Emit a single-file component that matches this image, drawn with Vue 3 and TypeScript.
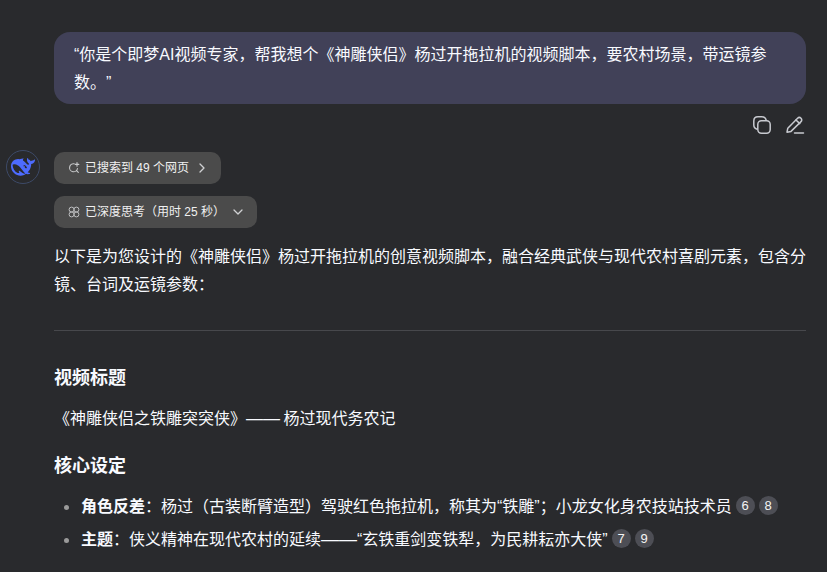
<script setup lang="ts">
const intro = '以下是为您设计的《神雕侠侣》杨过开拖拉机的创意视频脚本，融合经典武侠与现代农村喜剧元素，包含分镜、台词及运镜参数：'
</script>

<template>
  <div class="page">
    <div class="bubble">“你是个即梦AI视频专家，帮我想个《神雕侠侣》杨过开拖拉机的视频脚本，要农村场景，带运镜参数。”</div>
    <div class="actions">
      <svg width="20" height="20" viewBox="0 0 20 20" fill="none" stroke="#c8cad0" stroke-width="1.5">
        <rect x="5.8" y="5.8" width="12.4" height="12.4" rx="3.6" />
        <path d="M5.2 14.2C3 13.6 1.8 12.2 1.8 10V6c0-2.6 1.6-4.2 4.2-4.2h4c2.2 0 3.600 1.200 4.200 3.400" />
      </svg>
      <svg width="20" height="20" viewBox="0 0 20 20" fill="none" stroke="#c8cad0" stroke-width="1.5" stroke-linejoin="round" stroke-linecap="round">
        <path d="M2 17.200l.8-4L12.600 3.200c1-1 2.400-1 3.400 0s1 2.400 0 3.400L6 16.400z" />
        <path d="M11 5l3.800 3.600" />
        <path d="M9.500 18h9" />
      </svg>
    </div>
    <div class="answer">
      <div class="avatar">
        <svg width="24" height="24" viewBox="0 0 24 24">
          <path fill="#4d6bfe" d="M23.748 4.482c-.254-.124-.364.113-.512.234-.051.039-.094.09-.137.136-.372.397-.806.657-1.373.626-.829-.046-1.537.214-2.163.848-.133-.782-.575-1.248-1.247-1.548-.352-.156-.708-.311-.955-.65-.172-.241-.219-.51-.305-.774-.055-.16-.11-.323-.293-.35-.2-.031-.278.136-.356.276-.313.572-.434 1.202-.422 1.84.027 1.436.633 2.58 1.838 3.393.137.093.172.187.129.323-.082.28-.18.552-.266.833-.055.179-.137.217-.329.14a5.526 5.526 0 01-1.736-1.18c-.857-.828-1.631-1.742-2.597-2.458a11.365 11.365 0 00-.689-.471c-.985-.957.13-1.743.388-1.836.27-.098.093-.432-.779-.428-.872.004-1.67.295-2.687.684a3.055 3.055 0 01-.465.137 9.597 9.597 0 00-2.883-.102c-1.885.21-3.39 1.102-4.497 2.623C.082 8.606-.231 10.684.152 12.85c.403 2.284 1.569 4.175 3.36 5.653 1.858 1.533 3.997 2.284 6.438 2.14 1.482-.085 3.133-.284 4.994-1.86.47.234.962.327 1.78.397.63.059 1.236-.03 1.705-.128.735-.156.684-.837.419-.961-2.155-1.004-1.682-.595-2.113-.926 1.096-1.296 2.746-2.642 3.392-7.003.05-.347.007-.565 0-.845-.004-.17.035-.237.23-.256a4.173 4.173 0 001.545-.475c1.396-.763 1.96-2.015 2.093-3.517.02-.23-.004-.467-.247-.588zM11.581 18c-2.089-1.642-3.102-2.183-3.52-2.16-.392.024-.321.471-.235.763.09.288.207.486.371.739.114.167.192.416-.113.603-.673.416-1.842-.14-1.897-.167-1.361-.802-2.5-1.86-3.301-3.307-.774-1.393-1.224-2.887-1.298-4.482-.02-.386.093-.522.477-.592a4.696 4.696 0 011.529-.039c2.132.312 3.946 1.265 5.468 2.774.868.86 1.525 1.887 2.202 2.891.72 1.066 1.494 2.082 2.48 2.914.348.292.625.514.891.677-.802.09-2.14.11-3.054-.614zm1-6.44a.306.306 0 01.415-.287.302.302 0 01.2.288.306.306 0 01-.31.307.303.303 0 01-.304-.308zm3.11 1.596c-.2.081-.399.151-.59.16a1.245 1.245 0 01-.798-.254c-.274-.23-.47-.358-.552-.758a1.73 1.73 0 01.016-.588c.07-.327-.008-.537-.239-.727-.187-.156-.426-.199-.688-.199a.559.559 0 01-.254-.078c-.11-.054-.2-.19-.114-.358.028-.054.16-.186.192-.21.356-.202.767-.136 1.146.016.352.144.618.408 1.001.782.391.451.462.576.685.914.176.265.336.537.445.848.067.195-.019.354-.25.452z" />
        </svg>
      </div>
      <div class="content">
        <div class="pill">
          <svg width="12" height="12" viewBox="0 0 12 12" fill="none" stroke="#c9cacc" stroke-width="1.100" stroke-linecap="round">
            <path d="M6.200 1.800A4 4 0 1 0 9.500 6.500" />
            <path d="M8.300 8.300l2 2" />
            <path d="M9 .6v3.600M7.200 2.400h3.600" />
          </svg>
          <span>已搜索到 49 个网页</span>
          <svg class="chev" width="12" height="12" viewBox="0 0 12 12" fill="none" stroke="#d0d1d3" stroke-width="1.300" stroke-linecap="round" stroke-linejoin="round">
            <path d="M4 2l4 4-4 4" />
          </svg>
        </div>
        <div class="pill wide">
          <svg width="12" height="12" viewBox="0 0 12 12" fill="none" stroke="#c0c1c3" stroke-width="1">
            <circle cx="3.600" cy="3.600" r="2.500" />
            <circle cx="8.400" cy="3.600" r="2.500" />
            <circle cx="3.600" cy="8.400" r="2.500" />
            <circle cx="8.400" cy="8.400" r="2.500" />
          </svg>
          <span>已深度思考（用时 25 秒）</span>
          <svg class="chev" width="12" height="12" viewBox="0 0 12 12" fill="none" stroke="#d0d1d3" stroke-width="1.300" stroke-linecap="round" stroke-linejoin="round">
            <path d="M2 4l4 4 4-4" />
          </svg>
        </div>
        <p class="intro">{{ intro }}</p>
        <hr class="rule" />
        <h3 class="first">视频标题</h3>
        <p class="line">《神雕侠侣之铁雕突突侠》<span class="dash">——</span> 杨过现代务农记</p>
        <h3>核心设定</h3>
        <ul>
          <li><b>角色反差</b>：杨过（古装断臂造型）驾驶红色拖拉机，称其为“铁雕”；小龙女化身农技站技术员<span class="cite">6</span><span class="cite">8</span></li>
          <li><b>主题</b>：侠义精神在现代农村的延续<span class="dash">——</span>“玄铁重剑变铁犁，为民耕耘亦大侠”<span class="cite">7</span><span class="cite">9</span></li>
        </ul>
      </div>
    </div>
  </div>
</template>

<style>
html,
body {
  background: #292a2d;
}
</style>

<style scoped>
.page {
  box-sizing: border-box;
  height: 572px;
  overflow: hidden;
  padding: 32px 21px 0 6px;
  background: #292a2d;
  color: #f8faff;
  font-size: 16px;
  line-height: 28px;
  font-family: "Liberation Sans", "Noto Sans CJK SC", sans-serif;
  text-spacing-trim: space-all;
}
.bubble {
  margin-left: 48px;
  padding: 9px 20px 7px;
  border-radius: 16px;
  background: #414158;
}
.actions {
  display: flex;
  justify-content: flex-end;
  gap: 13px;
  height: 20px;
  margin-top: 11px;
  margin-right: 1px;
}
.answer {
  display: flex;
  gap: 14px;
  margin-top: 17px;
}
.avatar {
  flex: none;
  display: flex;
  align-items: center;
  justify-content: center;
  width: 32px;
  height: 32px;
  margin-top: -2px;
  border: 1px solid #3d4a68;
  border-radius: 50%;
}
.content {
  flex: 1;
  min-width: 0;
}
.pill {
  display: flex;
  align-items: center;
  box-sizing: border-box;
  width: 167px;
  height: 32px;
  margin-bottom: 12px;
  padding-left: 14px;
  border-radius: 10px;
  background: #4b4b4b;
  color: #f0f0f0;
  font-size: 12px;
  line-height: 18px;
}
.pill.wide {
  width: 203px;
}
.pill span {
  margin-left: 5px;
}
.chev {
  margin-left: 7px;
}
.intro {
  margin: 15px 0 0;
}
.rule {
  height: 1px;
  margin: 31px 0 0;
  border: 0;
  background: #47484c;
}
h3 {
  margin: 19px 0 0;
  font-size: 18px;
  line-height: 28px;
  font-weight: 600;
}
h3.first {
  margin-top: 33px;
}
.line {
  margin: 13px 0 0;
  word-spacing: -1px;
}
.dash {
  font-size: 18px;
  line-height: 1;
}
.line .dash {
  font-size: 17px;
}
ul {
  margin: 13px 0 0;
  padding: 0 0 0 27px;
  list-style: none;
}
li {
  position: relative;
  margin-bottom: 5px;
  white-space: nowrap;
}
li::before {
  content: "";
  position: absolute;
  left: -17px;
  top: 12px;
  width: 5px;
  height: 5px;
  border-radius: 50%;
  background: #9a9a9a;
}
b {
  font-weight: 600;
}
.cite {
  display: inline-flex;
  align-items: center;
  justify-content: center;
  width: 19px;
  height: 19px;
  margin-left: 4px;
  border-radius: 50%;
  background: #4d4e55;
  color: #f4f4f4;
  font-size: 13px;
  line-height: 19px;
  vertical-align: 2px;
}
</style>
